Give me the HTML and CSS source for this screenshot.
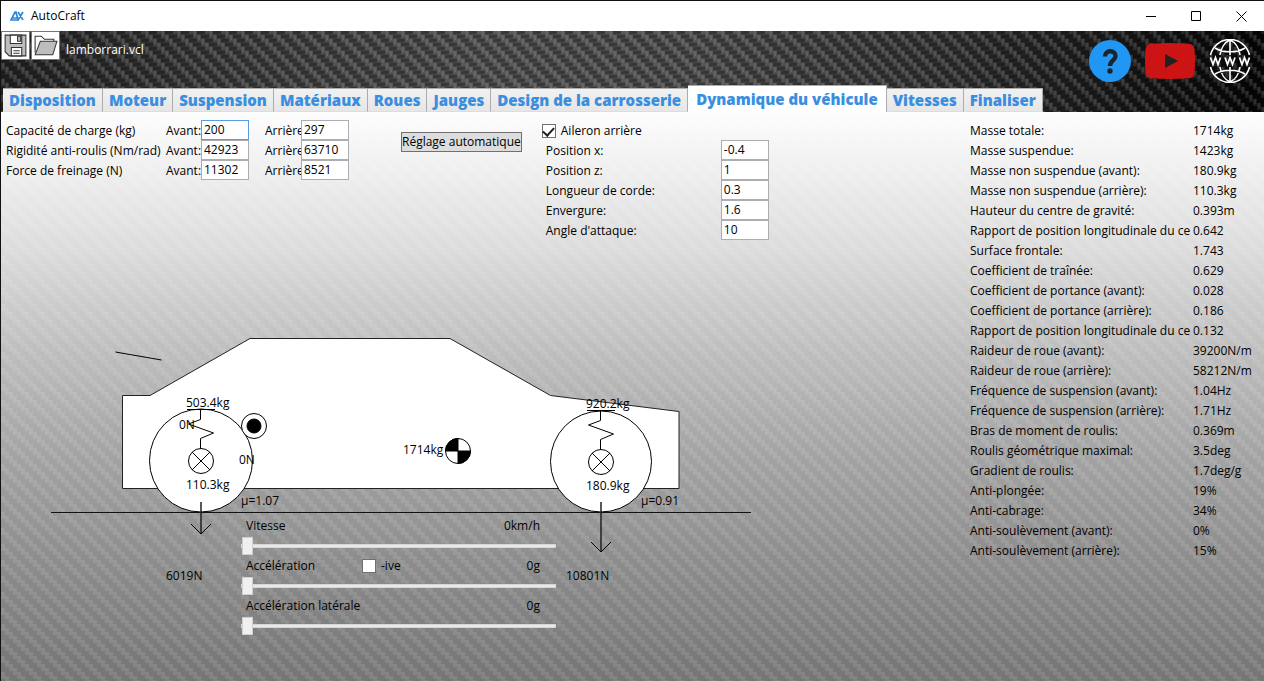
FILE: index.html
```html
<!DOCTYPE html>
<html lang="fr">
<head>
<meta charset="utf-8">
<title>AutoCraft</title>
<link rel="stylesheet" href="styles.css">
</head>
<body>
<div class="window">
  <header class="titlebar">
    <svg class="app-logo" viewBox="0 0 14 10" aria-hidden="true"><path d="M1 9 5 1h1l2 8zM8 1l5 8M13 1 8 9M3 7h4" fill="none" stroke="#2f87d8" stroke-width="1.7"/></svg>
    <h1 class="app-name">AutoCraft</h1>
    <div class="window-buttons">
      <button aria-label="Réduire"><svg viewBox="0 0 11 11"><path d="M0 5.500h10"/></svg></button>
      <button aria-label="Agrandir"><svg viewBox="0 0 11 11"><path d="M.5.5h9v9h-9z"/></svg></button>
      <button aria-label="Fermer"><svg viewBox="0 0 11 11"><path d="m.5.5 10 10M10.500.5l-10 10"/></svg></button>
    </div>
  </header>

  <div class="banner">
    <svg class="weave" aria-hidden="true">
      <defs>
        <pattern id="twill-dark" width="16" height="16" patternUnits="userSpaceOnUse">
          <g fill="#000" fill-opacity=".22"><path d="M4 0h8v3H4zM8 4h8v3H8zM12 8h4v3h-4zM0 8h4v3H0zM0 12h8v3H0z"/></g>
          <g fill="#fff" fill-opacity=".09"><path d="M0 0h4v7H0zM4 4h4v7H4zM8 8h4v7H8zM12 12h4v4h-4zM12 0h4v3h-4z"/></g>
          <g fill="#fff" fill-opacity=".08"><path d="M1 0h2v5H1zM5 4h2v5H5zM9 8h2v5H9zM13 12h2v4h-2z"/></g>
        </pattern>
      </defs>
      <rect width="100%" height="100%" fill="url(#twill-dark)"/>
    </svg>
    <div class="toolbar">
      <div class="file-tools">
        <button class="tool" aria-label="Enregistrer">
          <svg viewBox="0 0 26 26"><path d="M3 3h20v20H7l-4-4z" fill="#bdbdbd" stroke="#333"/><path d="M8 3h11v8H8z" fill="#fff" stroke="#333"/><path d="M15 4h3v5h-3z" fill="#bdbdbd" stroke="#333"/><path d="M9 15h10v8H9z" fill="#fff" stroke="#333"/><path d="M11 18h6M11 20.500h6" stroke="#333"/></svg>
        </button>
        <button class="tool" aria-label="Ouvrir">
          <svg viewBox="0 0 26 26"><path d="M3 20V4h6l3 3h9v3" fill="#fff" stroke="#333"/><path d="M3 22 8 9h16l-4 13z" fill="#bdbdbd" stroke="#333"/></svg>
        </button>
        <span class="file-name">lamborrari.vcl</span>
      </div>
      <nav class="links" aria-label="Liens">
        <a href="#aide" aria-label="Aide"><svg width="42" height="42" viewBox="0 0 42 42"><circle cx="21" cy="21" r="21" fill="#2196f3"/><path d="M16 16.500c0-7 10.500-7 10.500-.5 0 4.500-5.500 4.500-5.500 10" fill="none" stroke="#1c2329" stroke-width="4.400"/><circle cx="21" cy="31" r="2.700" fill="#1c2329"/></svg></a>
        <a href="#videos" aria-label="Vidéos"><svg width="50" height="36" viewBox="0 0 50 36"><path d="M6 .8Q25-.8 44 .8q5 .5 5.500 5.500 1 11.700 0 23.400-.5 5-5.500 5.500-19 1.600-38 0-5-.5-5.500-5.500-1-11.700 0-23.400Q1 1.300 6 .8z" fill="#cc1414"/><path d="m20 11 13 7-13 7z" fill="#222"/></svg></a>
        <a href="#site" aria-label="Site web"><svg width="42" height="44" viewBox="0 0 42 44"><g fill="none" stroke="#fff" stroke-width="1.600"><path d="M1.500 16a20 20 0 0 1 39 0M1.500 28a20 20 0 0 0 39 0M21 1v15M21 28v15M11 16c1-7 5-13 10-15 5 2 9 8 10 15M11 28c1 7 5 13 10 15 5-2 9-8 10-15M6 9c8 5 22 5 30 0M6 35c8-5 22-5 30 0"/><path d="m1.500 18.500 2.500 7 2.500-7 2.500 7 2.500-7M16 18.500l2.500 7 2.500-7 2.500 7 2.500-7M30.500 18.500l2.500 7 2.500-7 2.500 7 2.500-7" stroke-width="1.700"/></g></svg></a>
      </nav>
    </div>
    <div class="tabs" role="tablist">
      <button class="tab" role="tab">Disposition</button>
      <button class="tab" role="tab">Moteur</button>
      <button class="tab" role="tab">Suspension</button>
      <button class="tab" role="tab">Matériaux</button>
      <button class="tab" role="tab">Roues</button>
      <button class="tab" role="tab">Jauges</button>
      <button class="tab" role="tab">Design de la carrosserie</button>
      <button class="tab active" role="tab" aria-selected="true">Dynamique du véhicule</button>
      <button class="tab" role="tab">Vitesses</button>
      <button class="tab" role="tab">Finaliser</button>
    </div>
  </div>

  <main class="page">
    <svg class="weave" aria-hidden="true">
      <defs>
        <pattern id="twill-light" width="16" height="16" patternUnits="userSpaceOnUse">
          <g fill="#fff" fill-opacity=".1"><path d="M0 0h4v7H0zM4 4h4v7H4zM8 8h4v7H8zM12 12h4v4h-4zM12 0h4v3h-4z"/></g>
        </pattern>
      </defs>
      <rect width="100%" height="100%" fill="url(#twill-light)"/>
    </svg>
    <div class="workspace">
      <div class="forms">
        <div class="axle-form">
          <span>Capacité de charge (kg)</span>
          <label for="load-f">Avant:</label><input class="field focused" id="load-f" value="200">
          <label class="rear" for="load-r">Arrière</label><input class="field" id="load-r" value="297">
          <span>Rigidité anti-roulis (Nm/rad)</span>
          <label for="roll-f">Avant:</label><input class="field" id="roll-f" value="42923">
          <label class="rear" for="roll-r">Arrière</label><input class="field" id="roll-r" value="63710">
          <span>Force de freinage (N)</span>
          <label for="brake-f">Avant:</label><input class="field" id="brake-f" value="11302">
          <label class="rear" for="brake-r">Arrière</label><input class="field" id="brake-r" value="8521">
        </div>
        <button class="auto">Réglage automatique</button>
        <div class="wing-form">
          <label class="check wing-check"><input type="checkbox" checked>Aileron arrière</label>
          <label for="px">Position x:</label><input class="field" id="px" value="-0.4">
          <label for="pz">Position z:</label><input class="field" id="pz" value="1">
          <label for="chord">Longueur de corde:</label><input class="field" id="chord" value="0.3">
          <label for="span">Envergure:</label><input class="field" id="span" value="1.6">
          <label for="aoa">Angle d'attaque:</label><input class="field" id="aoa" value="10">
        </div>
      </div>

      <div class="scene">
        <svg class="car" width="760" height="320" viewBox="0 320 760 320" role="img" aria-label="Vue latérale du véhicule">
          <g fill="none" stroke="#000">
            <path d="M115.500 352 161.500 360"/>
            <path d="M122.500 395.500v93h556.500v-77L550.500 395.500 450 338.500H250L150 395.500z" fill="#fff" stroke="#222"/>
            <circle cx="201" cy="460.500" r="51.500" fill="#fff"/>
            <circle cx="601" cy="461.500" r="50.500" fill="#fff"/>
            <path d="M51 512.500h700" stroke="#111"/>
            <path d="M187 409.500h28M200.500 409.500v10l-12 4.500 25 9-13 5.500v10M587 410.500h28M600.500 410.500v10l-12 4.500 25 9-13 5.500v10"/>
            <circle cx="201" cy="461" r="12.500"/><path d="m192 452 18 18M210 452l-18 18"/>
            <circle cx="601" cy="462" r="12.500"/><path d="m592 453 18 18M610 453l-18 18"/>
            <circle cx="254" cy="426" r="12.500" fill="#fff"/><circle cx="254" cy="426" r="7" fill="#000"/>
            <circle cx="458" cy="451" r="12.500" fill="#fff"/>
            <path d="M458 451v-12.500a12.500 12.500 0 0 0-12.500 12.500zM458 451v12.500a12.500 12.500 0 0 0 12.500-12.500z" fill="#000"/>
            <path d="M201 502v32M601 502v50" stroke="#222" stroke-width="1.500"/>
            <path d="m191 524 10 10 10-10M591 542l10 10 10-10"/>
          </g>
          <g class="car-text">
            <text x="186" y="407">503.4kg</text><text x="179" y="429">0N</text>
            <text x="239" y="464">0N</text><text x="186" y="489">110.3kg</text>
            <text x="241" y="505">μ=1.07</text><text x="403" y="454">1714kg</text>
            <text x="586" y="408">920.2kg</text><text x="586" y="490">180.9kg</text>
            <text x="641" y="505">μ=0.91</text><text x="166" y="580">6019N</text>
            <text x="566" y="580">10801N</text>
          </g>
        </svg>
        <div class="sliders">
          <div class="slider-head"><label for="speed">Vitesse</label><output>0km/h</output></div>
          <input type="range" id="speed" value="0">
          <div class="slider-head"><label for="accel">Accélération</label><label class="check sign"><input type="checkbox">-ive</label><output>0g</output></div>
          <input type="range" id="accel" value="0">
          <div class="slider-head"><label for="lateral">Accélération latérale</label><output>0g</output></div>
          <input type="range" id="lateral" value="0">
        </div>
      </div>
    </div>

    <table class="stats">
      <tr><th>Masse totale:</th><td>1714kg</td></tr>
      <tr><th>Masse suspendue:</th><td>1423kg</td></tr>
      <tr><th>Masse non suspendue (avant):</th><td>180.9kg</td></tr>
      <tr><th>Masse non suspendue (arrière):</th><td>110.3kg</td></tr>
      <tr><th>Hauteur du centre de gravité:</th><td>0.393m</td></tr>
      <tr><th>Rapport de position longitudinale du ce</th><td>0.642</td></tr>
      <tr><th>Surface frontale:</th><td>1.743</td></tr>
      <tr><th>Coefficient de traînée:</th><td>0.629</td></tr>
      <tr><th>Coefficient de portance (avant):</th><td>0.028</td></tr>
      <tr><th>Coefficient de portance (arrière):</th><td>0.186</td></tr>
      <tr><th>Rapport de position longitudinale du ce</th><td>0.132</td></tr>
      <tr><th>Raideur de roue (avant):</th><td>39200N/m</td></tr>
      <tr><th>Raideur de roue (arrière):</th><td>58212N/m</td></tr>
      <tr><th>Fréquence de suspension (avant):</th><td>1.04Hz</td></tr>
      <tr><th>Fréquence de suspension (arrière):</th><td>1.71Hz</td></tr>
      <tr><th>Bras de moment de roulis:</th><td>0.369m</td></tr>
      <tr><th>Roulis géométrique maximal:</th><td>3.5deg</td></tr>
      <tr><th>Gradient de roulis:</th><td>1.7deg/g</td></tr>
      <tr><th>Anti-plongée:</th><td>19%</td></tr>
      <tr><th>Anti-cabrage:</th><td>34%</td></tr>
      <tr><th>Anti-soulèvement (avant):</th><td>0%</td></tr>
      <tr><th>Anti-soulèvement (arrière):</th><td>15%</td></tr>
    </table>
  </main>
</div>
</body>
</html>
```
FILE: styles.css
```css
* { box-sizing: border-box; }

body {
  margin: 0;
  font: 12px/20px "Open Sans", "Noto Sans", sans-serif;
  color: #000;
}

button, input { font: inherit; color: inherit; margin: 0; }

.window {
  display: flex;
  flex-direction: column;
  min-height: 100vh;
  border-top: 1px solid #111;
  border-left: 1px solid #111;
}

.weave { position: absolute; inset: 0; width: 100%; height: 100%; z-index: -1; }

/* Title bar */
.titlebar { display: flex; align-items: center; height: 30px; padding-left: 9px; background: #fff; }
.app-logo { width: 14px; height: 10px; }
.app-name { flex: 1; margin: 0 0 0 7px; font-size: 12px; font-weight: 400; }
.window-buttons { display: flex; }
.window-buttons button { display: grid; place-items: center; width: 45px; height: 30px; padding: 0; border: 0; background: none; }
.window-buttons svg { width: 11px; height: 11px; fill: none; stroke: #000; }

/* Banner */
.banner {
  position: relative;
  z-index: 0;
  display: flex;
  flex-direction: column;
  justify-content: space-between;
  height: 81px;
  background: linear-gradient(90deg, #222, #3a3a3a 20%, #4a4a4a 38%, #474747 55%, #303030 75%, #131313 92%, #050505);
}
.toolbar { display: flex; justify-content: space-between; height: 54px; }
.file-tools { display: flex; align-items: flex-start; gap: 1px; }
.tool { width: 29px; height: 29px; padding: 0; border: 1px solid #777; background: #fff; }
.tool svg { display: block; width: 27px; height: 27px; }
.file-name { padding: 9px 0 0 5px; color: #fff; }
.links { display: flex; align-items: center; gap: 14px; padding: 6px 13px 0 0; }
.links a, .links svg { display: block; }

.tabs { display: flex; align-items: flex-end; padding-left: 2px; }
.tab {
  height: 24px;
  padding: 0 6px;
  border: 1px solid #acacac;
  border-bottom-color: #ddd;
  border-left: 0;
  background: linear-gradient(#f1f1f1, #e6e6e6);
  color: #3a8ee0;
  font-size: 15px;
  font-weight: 800;
  line-height: 22px;
  white-space: nowrap;
}
.tab.active { height: 27px; padding: 0 8px; border-bottom: 0; background: #fff; }

/* Page */
.page {
  position: relative;
  z-index: 0;
  flex: 1;
  display: flex;
  justify-content: space-between;
  background: linear-gradient(#fdfdfd, #dcdcdc 24%, #bebebe 42%, #a4a4a4 60%, #8e8e8e 78%, #757575);
}
.workspace { flex: 1; min-width: 0; }
.forms { display: flex; align-items: flex-start; height: 208px; padding: 8px 0 0 5px; }
.axle-form { display: grid; grid-template-columns: 160px 35px 48px 52px 48px; grid-auto-rows: 20px; }
.axle-form > *, .wing-form > * { white-space: nowrap; }
.axle-form > :not(input), .wing-form > label { line-height: 22px; }
.rear { padding-left: 16px; }
.field { width: 48px; height: 20px; padding: 0 2px; border: 1px solid #abadb3; border-radius: 0; background: #fff; outline: 0; }
.focused { border-color: #569de5; }
.auto { height: 20px; margin: 12px 0 0 52px; padding: 0; border: 1px solid #707070; background: #ddd; line-height: 18px; white-space: nowrap; }
.wing-form { display: grid; grid-template-columns: 175px 48px; grid-auto-rows: 20px; margin-left: 24px; }
.check { display: flex; align-items: center; gap: 5px; }
.wing-check { grid-column: 1 / -1; margin-left: -4px; padding-top: 2px; }
.check input { appearance: none; display: grid; place-items: center; width: 14px; height: 14px; border: 1px solid #707070; background: #fff; }
.check input:checked::after { content: ""; width: 9px; height: 5px; border: solid #212121; border-width: 0 0 2px 2px; transform: translateY(-1px) rotate(-47deg); }

.scene { position: relative; }
.car { display: block; margin-left: -1px; }
.car-text { font-size: 12px; }
.sliders { position: absolute; left: 240px; top: 196px; width: 315px; }
.slider-head { display: flex; height: 20px; padding: 0 16px 0 5px; position: relative; }
.slider-head output { margin-left: auto; }
.sign { position: absolute; left: 121px; top: 0; }

input[type="range"] { display: block; appearance: none; width: 100%; height: 20px; background: none; }
input[type="range"]::-webkit-slider-runnable-track { height: 4px; border: 1px solid #d6d6d6; background: #e7eaea; }
input[type="range"]::-webkit-slider-thumb { appearance: none; width: 11px; height: 18px; margin-top: -8px; border: 1px solid #d0d0d0; background: #f0f0f0; }

.stats { width: 294px; margin-top: 9px; border-collapse: collapse; table-layout: fixed; align-self: flex-start; }
.stats th, .stats td { height: 20px; padding: 0; font-weight: 400; text-align: left; white-space: nowrap; }
.stats th { width: 223px; }
```
